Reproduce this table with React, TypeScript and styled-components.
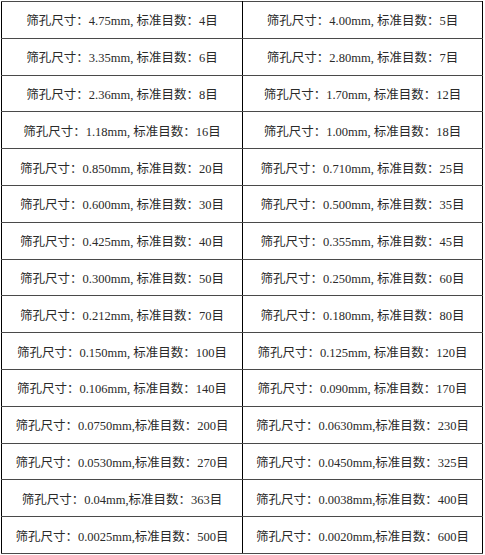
import React from "react";
import styled, { createGlobalStyle } from "styled-components";

const Global = createGlobalStyle`
  html, body { margin: 0; padding: 0; background: #fff; }
  body { font-family: "Liberation Serif", "Noto Sans CJK SC", serif; }
`;

const Table = styled.table`
  margin: 1px 0 0 1px;
  width: 481px;
  height: 553px;
  border-collapse: collapse;
  table-layout: fixed;
`;

const Row = styled.tr``;

const Cell = styled.td`
  border-top: 1px solid #4a4a4a;
  border-bottom: 1px solid #4a4a4a;
  border-left: 1px solid #000;
  border-right: 1px solid #000;
  padding: 0;
  text-align: center;
  vertical-align: middle;
  font-family: "Liberation Serif", "Noto Sans CJK SC", serif;
  font-size: 12.5px;
  color: #2a2a2a;
  white-space: nowrap;
`;

const rows: [string, string, string, string, boolean][] = [
  ["4.75mm", "4", "4.00mm", "5", true],
  ["3.35mm", "6", "2.80mm", "7", true],
  ["2.36mm", "8", "1.70mm", "12", true],
  ["1.18mm", "16", "1.00mm", "18", true],
  ["0.850mm", "20", "0.710mm", "25", true],
  ["0.600mm", "30", "0.500mm", "35", true],
  ["0.425mm", "40", "0.355mm", "45", true],
  ["0.300mm", "50", "0.250mm", "60", true],
  ["0.212mm", "70", "0.180mm", "80", true],
  ["0.150mm", "100", "0.125mm", "120", true],
  ["0.106mm", "140", "0.090mm", "170", true],
  ["0.0750mm", "200", "0.0630mm", "230", false],
  ["0.0530mm", "270", "0.0450mm", "325", false],
  ["0.04mm", "363", "0.0038mm", "400", false],
  ["0.0025mm", "500", "0.0020mm", "600", false],
];

const text = (size: string, mesh: string, spaced: boolean) =>
  `筛孔尺寸：${size},${spaced ? " " : ""}标准目数：${mesh}目`;

export default function App() {
  return (
    <>
      <Global />
      <Table>
        <colgroup>
          <col style={{ width: 241 }} />
          <col style={{ width: 240 }} />
        </colgroup>
        <tbody>
          {rows.map(([s1, m1, s2, m2, sp]) => (
            <Row key={s1}>
              <Cell>{text(s1, m1, sp)}</Cell>
              <Cell>{text(s2, m2, sp)}</Cell>
            </Row>
          ))}
        </tbody>
      </Table>
    </>
  );
}
